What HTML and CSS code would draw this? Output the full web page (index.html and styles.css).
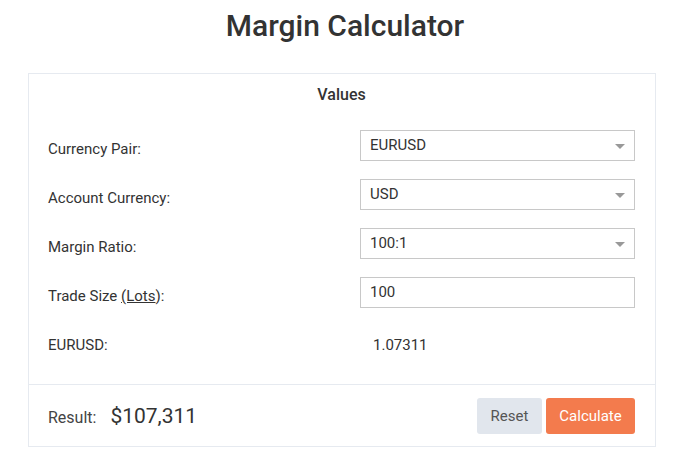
FILE: index.html
```html
<!DOCTYPE html>
<html lang="en">
<head>
    <meta charset="UTF-8">
    <meta name="viewport" content="width=device-width, initial-scale=1.0">
    <title>Margin Calculator</title>
    <link rel="stylesheet" href="styles.css">
</head>
<body>
    <div class="page">
        <h1>Margin Calculator</h1>
        <div class="card">
            <div class="card-body">
                <div class="card-title">Values</div>
                <div class="row">
                    <label>Currency Pair:</label>
                    <div class="select">EURUSD<span class="caret"></span></div>
                </div>
                <div class="row">
                    <label>Account Currency:</label>
                    <div class="select">USD<span class="caret"></span></div>
                </div>
                <div class="row">
                    <label>Margin Ratio:</label>
                    <div class="select">100:1<span class="caret"></span></div>
                </div>
                <div class="row">
                    <label>Trade Size <u>(Lots</u>):</label>
                    <div class="input">100</div>
                </div>
                <div class="row row-rate">
                    <label>EURUSD:</label>
                    <div class="value">1.07311</div>
                </div>
            </div>
            <div class="card-footer">
                <div class="result">
                    <span class="result-label">Result:</span>
                    <span class="result-value">$107,311</span>
                </div>
                <div class="buttons">
                    <button class="btn-reset">Reset</button>
                    <button class="btn-calc">Calculate</button>
                </div>
            </div>
        </div>
    </div>
</body>
</html>
```
FILE: styles.css
```css
body {
    font-family: Roboto, "Liberation Sans", sans-serif;
    background-color: #fff;
    color: #333;
    margin: 0;
    padding: 0;
}
.page {
    padding: 0 35px 0 28px;
}
h1 {
    margin: 0;
    padding-top: 6px;
    height: 73px;
    box-sizing: border-box;
    text-align: center;
    font-size: 30px;
    font-weight: 500;
    line-height: 40px;
    color: #333;
    padding-left: 6px;
}
.card {
    border: 1px solid #e6eaf0;
}
.card-body {
    padding: 11px 20px 24px 19px;
}
.card-title {
    text-align: center;
    font-size: 16px;
    font-weight: 500;
    line-height: 20px;
    margin-bottom: 25px;
}
.row {
    display: flex;
    align-items: center;
    justify-content: space-between;
    height: 31px;
    margin-bottom: 18px;
}
.row-rate {
    margin-top: 21px;
}
.row:last-child {
    margin-bottom: 0;
}
label {
    font-size: 15px;
    padding-top: 7px;
}
.row-rate label {
    padding-top: 0;
}
.select, .input {
    position: relative;
    width: 275px;
    height: 31px;
    box-sizing: border-box;
    border: 1px solid #c8c8c8;
    padding: 0 9px;
    font-size: 15px;
    line-height: 29px;
    color: #333;
}
.caret {
    position: absolute;
    right: 9px;
    top: 13px;
    border-left: 5px solid transparent;
    border-right: 5px solid transparent;
    border-top: 5px solid #999;
}
.value {
    width: 275px;
    box-sizing: border-box;
    padding-left: 13px;
    font-size: 15px;
}
.card-footer {
    border-top: 1px solid #e6eaf0;
    padding: 13px 20px 12px 19px;
    display: flex;
    align-items: center;
    justify-content: space-between;
}
.result-label {
    font-size: 16px;
    margin-right: 10px;
    color: #444;
}
.result-value {
    font-size: 21px;
}
.buttons {
    display: flex;
    gap: 4px;
}
.buttons button {
    border: none;
    height: 36px;
    border-radius: 3px;
    font-family: Roboto, "Liberation Sans", sans-serif;
    font-size: 15px;
    cursor: pointer;
}
.btn-reset {
    width: 65px;
    background-color: #e1e6ed;
    color: #555;
}
.btn-calc {
    width: 89px;
    background-color: #f37b4d;
    color: white;
}
```
